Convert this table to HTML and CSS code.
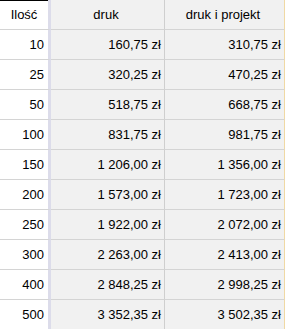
FILE: index.html
```html
<!DOCTYPE html>
<html lang="pl">
<head>
<meta charset="utf-8">
<link rel="stylesheet" href="styles.css">
</head>
<body>
<table class="price">
  <thead>
    <tr><th class="q">Ilość</th><th class="p">druk</th><th class="pp">druk i projekt</th></tr>
  </thead>
  <tbody>
    <tr><td class="q">10</td><td class="p">160,75 zł</td><td class="pp">310,75 zł</td></tr>
    <tr><td class="q">25</td><td class="p">320,25 zł</td><td class="pp">470,25 zł</td></tr>
    <tr><td class="q">50</td><td class="p">518,75 zł</td><td class="pp">668,75 zł</td></tr>
    <tr><td class="q">100</td><td class="p">831,75 zł</td><td class="pp">981,75 zł</td></tr>
    <tr><td class="q">150</td><td class="p">1 206,00 zł</td><td class="pp">1 356,00 zł</td></tr>
    <tr><td class="q">200</td><td class="p">1 573,00 zł</td><td class="pp">1 723,00 zł</td></tr>
    <tr><td class="q">250</td><td class="p">1 922,00 zł</td><td class="pp">2 072,00 zł</td></tr>
    <tr><td class="q">300</td><td class="p">2 263,00 zł</td><td class="pp">2 413,00 zł</td></tr>
    <tr><td class="q">400</td><td class="p">2 848,25 zł</td><td class="pp">2 998,25 zł</td></tr>
    <tr><td class="q">500</td><td class="p">3 352,35 zł</td><td class="pp">3 502,35 zł</td></tr>
  </tbody>
</table>
</body>
</html>
```
FILE: styles.css
```css
html, body {
  margin: 0;
  padding: 0;
  background: #ffffff;
}
.price {
  border-collapse: separate;
  border-spacing: 0;
  table-layout: fixed;
  width: 285px;
  font-family: "Liberation Sans", Arial, sans-serif;
  font-size: 13px;
  color: #000;
}
.price th, .price td {
  box-sizing: border-box;
  height: 30px;
  padding: 0;
  vertical-align: middle;
  font-weight: normal;
  white-space: nowrap;
  border-bottom: 1px solid #d4d4d4;
}
.price th {
  text-align: center;
}
.price td {
  text-align: right;
}
.q {
  width: 51px;
  background: #ffffff;
  border-right: 3px solid #dcdcea;
  padding-right: 4px !important;
}
th.q {
  padding-right: 0 !important;
  box-shadow: inset 0 1px 0 #000;
}
.p {
  width: 114px;
  background: #f1f1f1;
  border-right: 1px solid #cfcfcf;
  padding-right: 3px !important;
}
.pp {
  width: 120px;
  background: #f1f1f1;
  border-right: 1px solid #f0d9a4;
  padding-right: 3px !important;
}
```
